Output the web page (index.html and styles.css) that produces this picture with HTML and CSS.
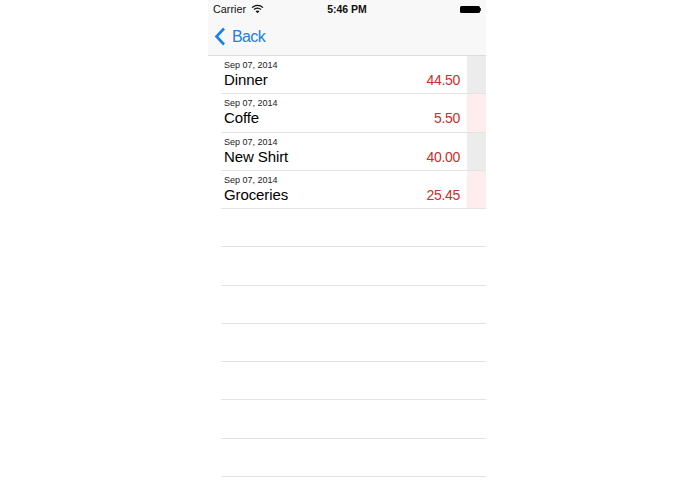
FILE: index.html
```html
<!DOCTYPE html>
<html lang="en">
<head>
    <meta charset="UTF-8">
    <meta name="viewport" content="width=device-width, initial-scale=1.0">
    <title>Expenses</title>
    <link rel="stylesheet" href="styles.css">
</head>
<body>
    <div class="phone">
        <!-- Status bar and nav -->
        <div class="top-bar">
            <div class="status-bar">
                <div class="status-left">
                    <span>Carrier</span>
                    <svg class="wifi" width="13" height="10" viewBox="0 0 13 10">
                        <path d="M1 3.6C4.1 .7 8.9 .7 12 3.6" fill="none" stroke="#111" stroke-width="1.3"/>
                        <path d="M3 5.6C5 3.9 8 3.9 10 5.6" fill="none" stroke="#111" stroke-width="1.3"/>
                        <path d="M4.6 7.2C5.7 6.3 7.3 6.3 8.4 7.2L6.5 9.3Z" fill="#111"/>
                    </svg>
                </div>
                <div class="status-time">5:46 PM</div>
                <div class="battery"><div class="battery-body"></div><div class="battery-tip"></div></div>
            </div>
            <div class="nav-bar">
                <svg class="back-icon" width="12" height="19" viewBox="0 0 12 19">
                    <path d="M10 1.5L2.5 9.5L10 17.5" fill="none" stroke="#1a7fe6" stroke-width="2.6"/>
                </svg>
                <span class="back-label">Back</span>
            </div>
        </div>

        <!-- Expense list -->
        <div class="list">
            <div class="row">
                <div class="row-main">
                    <div class="row-date">Sep 07, 2014</div>
                    <div class="row-line"><span>Dinner</span><span class="amount">44.50</span></div>
                </div>
                <div class="stripe stripe-grey"></div>
            </div>
            <div class="row">
                <div class="row-main">
                    <div class="row-date">Sep 07, 2014</div>
                    <div class="row-line"><span>Coffe</span><span class="amount">5.50</span></div>
                </div>
                <div class="stripe stripe-pink"></div>
            </div>
            <div class="row">
                <div class="row-main">
                    <div class="row-date">Sep 07, 2014</div>
                    <div class="row-line"><span>New Shirt</span><span class="amount">40.00</span></div>
                </div>
                <div class="stripe stripe-grey"></div>
            </div>
            <div class="row">
                <div class="row-main">
                    <div class="row-date">Sep 07, 2014</div>
                    <div class="row-line"><span>Groceries</span><span class="amount">25.45</span></div>
                </div>
                <div class="stripe stripe-pink"></div>
            </div>
            <div class="row"></div>
            <div class="row"></div>
            <div class="row"></div>
            <div class="row"></div>
            <div class="row"></div>
            <div class="row"></div>
            <div class="row"></div>
        </div>
    </div>
</body>
</html>
```

FILE: styles.css
```css
* {
    margin: 0;
    padding: 0;
    box-sizing: border-box;
}
html, body {
    width: 100%;
    height: 100%;
    background-color: #fff;
    overflow: hidden;
    font-family: "Liberation Sans", Arial, sans-serif;
    color: #000;
}
body {
    padding-left: 208px;
}
.phone {
    width: 278px;
}
/* Top bar */
.top-bar {
    height: 56px;
    background-color: #f8f8f8;
    border-bottom: 1px solid #dcdcdc;
}
.status-bar {
    height: 18px;
    display: flex;
    align-items: center;
    padding: 0 5px 0 5px;
    font-size: 10.8px;
    color: #111;
}
.status-left {
    flex: 1;
    display: flex;
    align-items: center;
    gap: 5px;
}
.status-time {
    font-weight: bold;
    font-size: 10.5px;
}
.battery {
    flex: 1;
    display: flex;
    align-items: center;
    justify-content: flex-end;
}
.battery-body {
    width: 20px;
    height: 7px;
    background-color: #000;
    border-radius: 1.5px;
}
.battery-tip {
    width: 1px;
    height: 3px;
    background-color: #333;
}
.nav-bar {
    height: 37px;
    display: flex;
    align-items: center;
    padding-left: 6px;
    gap: 6px;
}
.back-label {
    font-size: 16px;
    letter-spacing: -0.6px;
    color: #1a7fe6;
}
/* List */
.list {
    margin-left: 13px;
}
.row {
    height: 38.25px;
    display: flex;
    border-bottom: 1px solid #e3e3e3;
}
.row-main {
    flex: 1;
    padding: 4px 7px 0 3px;
}
.row-date {
    font-size: 9px;
    line-height: 11px;
    color: #222;
}
.row-line {
    display: flex;
    justify-content: space-between;
    align-items: baseline;
    font-size: 15px;
    letter-spacing: -0.1px;
    line-height: 18px;
}
.amount {
    font-size: 14px;
    letter-spacing: -0.3px;
    color: #c8302a;
}
.stripe {
    width: 19px;
}
.stripe-grey {
    background-color: #ececec;
}
.stripe-pink {
    background-color: #ffecec;
}
```
